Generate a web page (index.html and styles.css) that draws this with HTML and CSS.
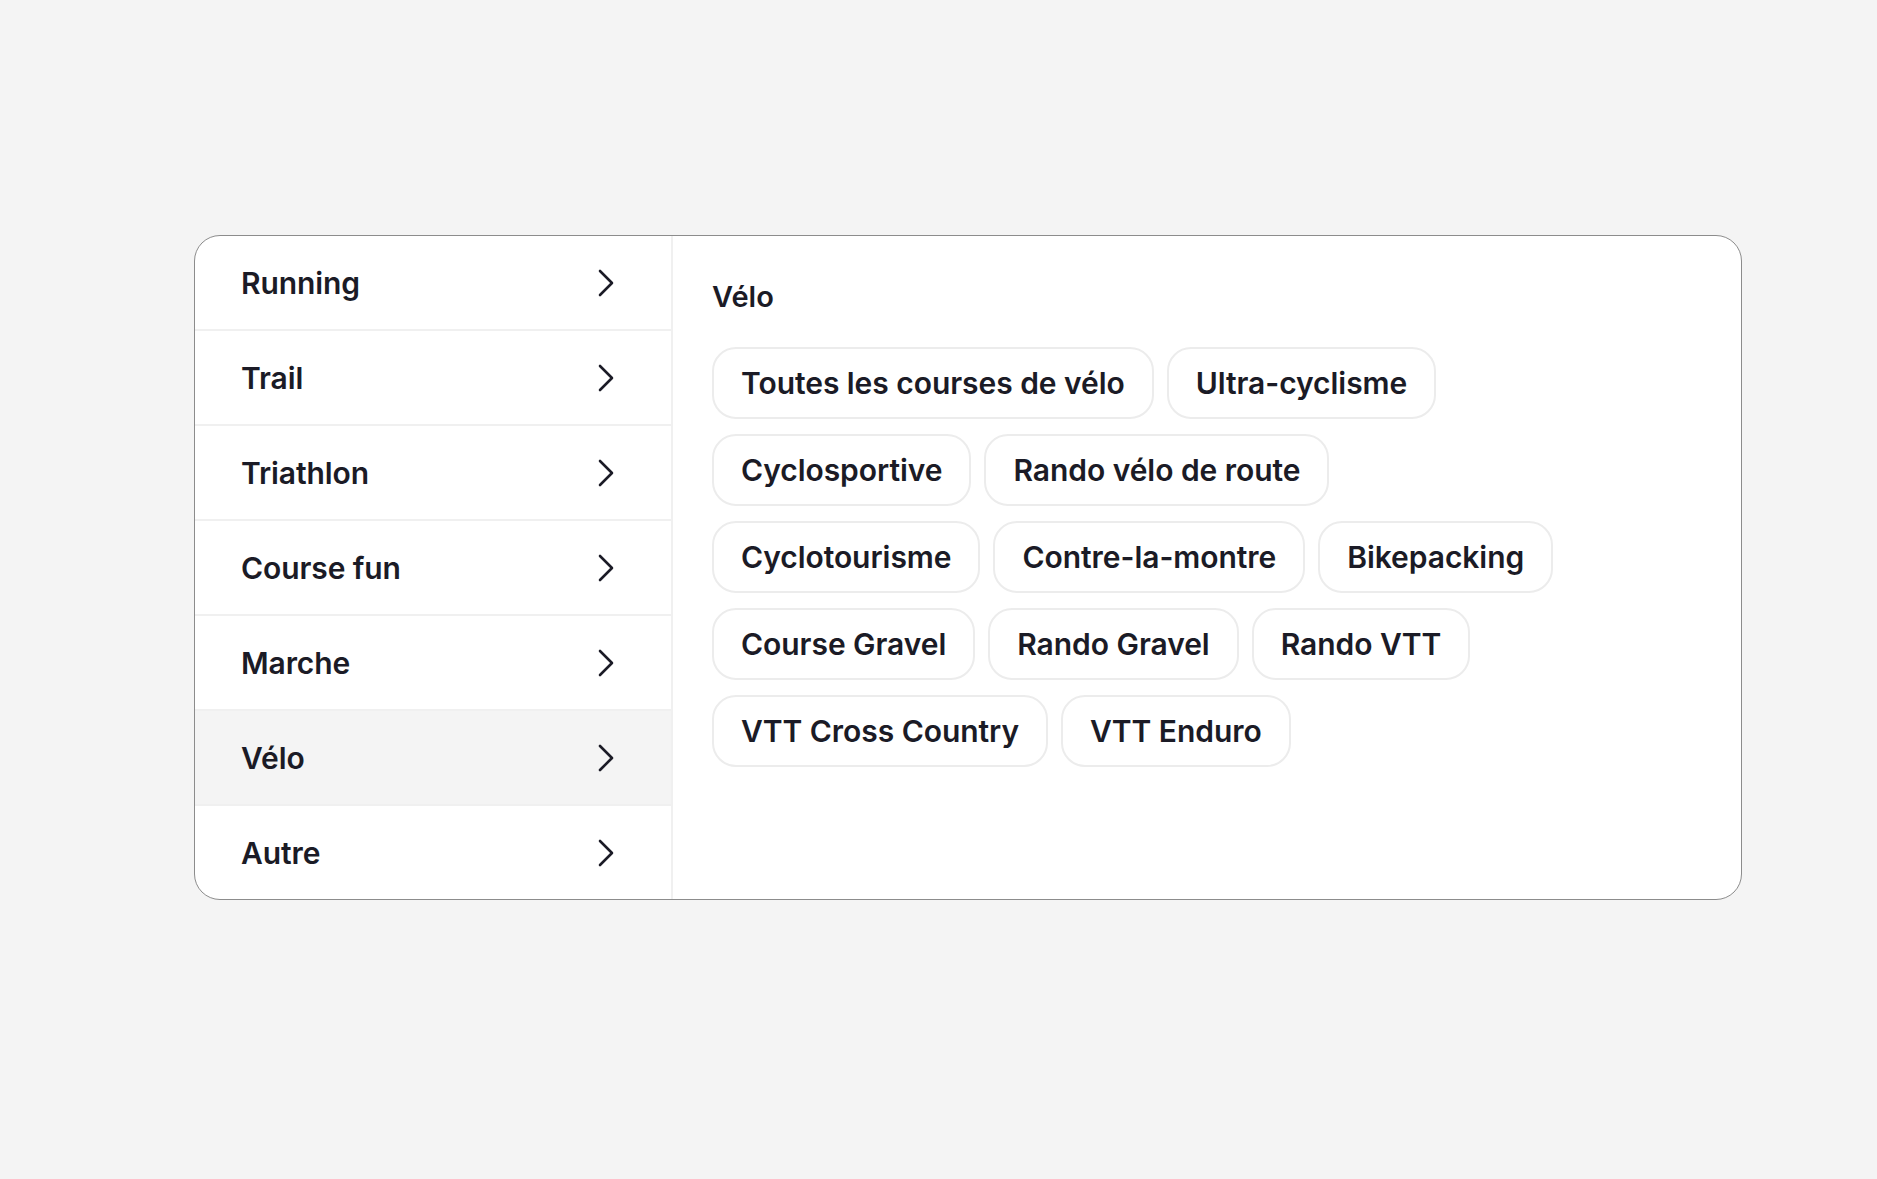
FILE: index.html
```html
<!DOCTYPE html>
<html lang="fr">
<head>
<meta charset="utf-8">
<title>Catégories</title>
<link rel="stylesheet" href="styles.css">
</head>
<body>
<div class="page">
  <div class="card">
    <nav class="nav">
      <div class="nav-item"><span>Running</span><svg class="chev" viewBox="0 0 16 28" width="16" height="28"><polyline points="2,2 14,14 2,26"/></svg></div>
      <div class="nav-item"><span>Trail</span><svg class="chev" viewBox="0 0 16 28" width="16" height="28"><polyline points="2,2 14,14 2,26"/></svg></div>
      <div class="nav-item"><span>Triathlon</span><svg class="chev" viewBox="0 0 16 28" width="16" height="28"><polyline points="2,2 14,14 2,26"/></svg></div>
      <div class="nav-item"><span>Course fun</span><svg class="chev" viewBox="0 0 16 28" width="16" height="28"><polyline points="2,2 14,14 2,26"/></svg></div>
      <div class="nav-item"><span>Marche</span><svg class="chev" viewBox="0 0 16 28" width="16" height="28"><polyline points="2,2 14,14 2,26"/></svg></div>
      <div class="nav-item active"><span>Vélo</span><svg class="chev" viewBox="0 0 16 28" width="16" height="28"><polyline points="2,2 14,14 2,26"/></svg></div>
      <div class="nav-item"><span>Autre</span><svg class="chev" viewBox="0 0 16 28" width="16" height="28"><polyline points="2,2 14,14 2,26"/></svg></div>
    </nav>
    <section class="content">
      <h2 class="heading">Vélo</h2>
      <div class="pills">
        <span class="pill">Toutes les courses de vélo</span>
        <span class="pill">Ultra-cyclisme</span>
        <span class="pill">Cyclosportive</span>
        <span class="pill">Rando vélo de route</span>
        <span class="pill">Cyclotourisme</span>
        <span class="pill">Contre-la-montre</span>
        <span class="pill">Bikepacking</span>
        <span class="pill">Course Gravel</span>
        <span class="pill">Rando Gravel</span>
        <span class="pill">Rando VTT</span>
        <span class="pill">VTT Cross Country</span>
        <span class="pill">VTT Enduro</span>
      </div>
    </section>
  </div>
</div>
</body>
</html>
```

FILE: styles.css
```css
* { box-sizing: border-box; }
html, body {
  margin: 0;
  padding: 0;
  background: #f4f4f4;
  font-family: Inter, "Noto Sans", "Liberation Sans", sans-serif;
  color: #1b1b26;
}
.page {
  padding: 235px 0 0 194px;
}
.card {
  width: 1548px;
  display: flex;
  background: #ffffff;
  border: 1px solid #8c8c8c;
  border-radius: 26px;
  overflow: hidden;
}
.nav {
  width: 478px;
  flex: none;
  border-right: 2px solid #f0f0f0;
  display: flex;
  flex-direction: column;
}
.nav-item {
  height: 95px;
  display: flex;
  align-items: center;
  justify-content: space-between;
  padding: 0 57px 0 46px;
  font-size: 30px;
  font-weight: 600;
  letter-spacing: -0.1px;
  border-bottom: 2px solid #f0f0f0;
}
.nav-item:last-child {
  height: 93px;
  border-bottom: none;
}
.nav-item.active {
  background: #f4f4f4;
}
.chev {
  display: block;
  fill: none;
  stroke: #1b1b26;
  stroke-width: 2.6;
  stroke-linecap: round;
  stroke-linejoin: round;
}
.content {
  flex: 1;
  padding: 44px 40px 0 39px;
}
.heading {
  margin: 0 0 33px 0;
  font-size: 29px;
  line-height: 34px;
  font-weight: 600;
}
.pills {
  display: flex;
  flex-wrap: wrap;
  gap: 15px 13px;
  max-width: 870px;
}
.pill {
  height: 72px;
  display: inline-flex;
  align-items: center;
  padding: 0 27px;
  border: 2px solid #ececec;
  border-radius: 24px;
  font-size: 30px;
  font-weight: 600;
  letter-spacing: -0.05px;
  white-space: nowrap;
}
```
